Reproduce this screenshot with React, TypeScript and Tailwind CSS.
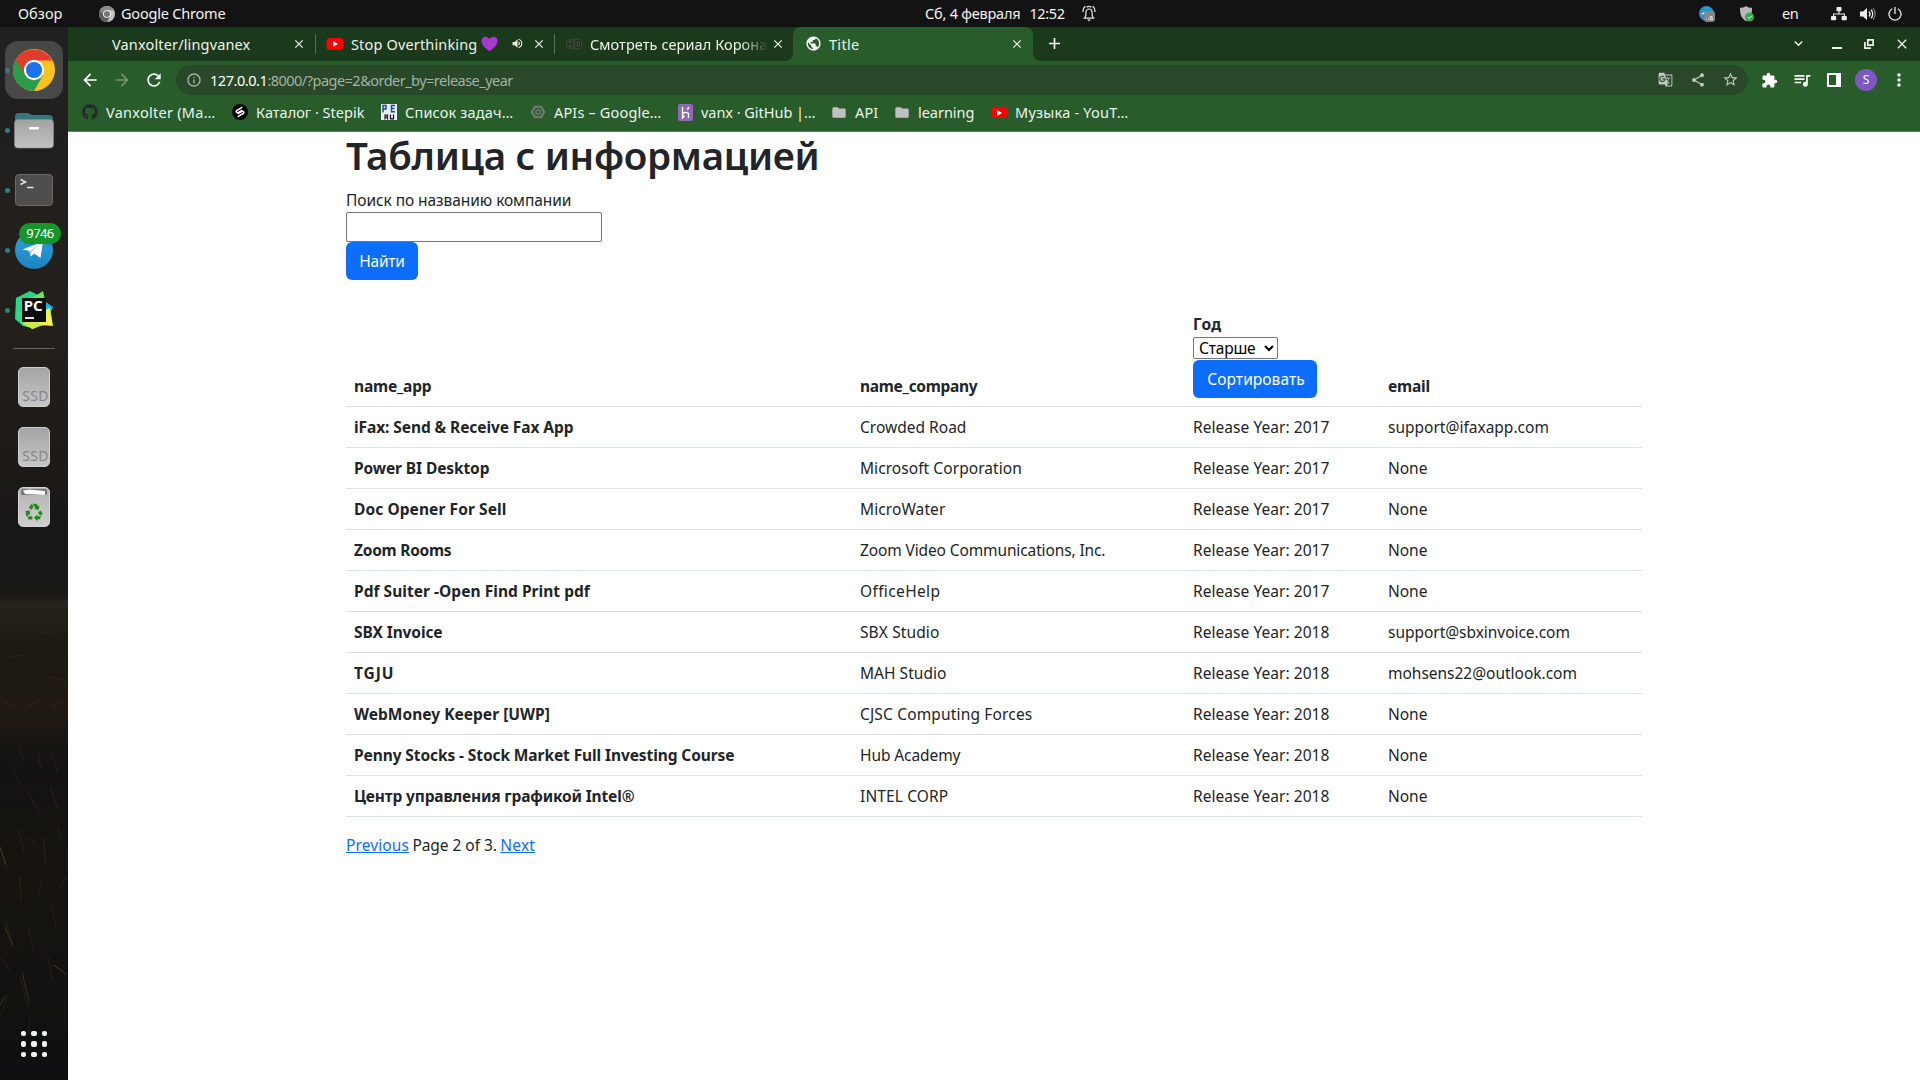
import { useLayoutEffect, useRef, type ReactNode } from "react";
import { FaGithub, FaYoutube } from "react-icons/fa";
import {
  MdArrowBack, MdArrowForward, MdRefresh, MdOutlineInfo, MdGTranslate, MdShare, MdStarBorder,
  MdExtension, MdQueueMusic, MdMoreVert, MdClose, MdAdd, MdVolumeUp, MdExpandMore, MdPublic, MdFolder, MdRecycling,
} from "react-icons/md";

/** Single-line label whose letter spacing is tuned so that it spans `w` pixels. */
function Fit({ w, className = "", children }: { w: number; className?: string; children: string }) {
  const ref = useRef<HTMLSpanElement>(null);
  useLayoutEffect(() => {
    const el = ref.current;
    if (!el) return;
    el.style.letterSpacing = "0px";
    const natural = el.getBoundingClientRect().width;
    el.style.letterSpacing = `${(w + 0.4 - natural) / Array.from(children).length}px`;
  }, [w, children]);
  return <span ref={ref} className={`inline-block whitespace-pre ${className}`}>{children}</span>;
}

function ChromeLogo({ size, mono = false }: { size: number; mono?: boolean }) {
  const c = mono ? ["#8a8a8a", "#5f5f5f", "#c4c4c4", "#777"] : ["#e33b2e", "#2a9c4a", "#fcc31e", "#1a73e8"];
  return (
    <svg width={size} height={size} viewBox="0 0 48 48">
      <circle cx="24" cy="24" r="24" fill={c[2]} />
      <path d="M24 24 L3.2 12 A24 24 0 0 0 24 48 L34.4 30 Z" fill={c[1]} />
      <path d="M24 13 H44.8 A24 24 0 0 0 3.2 12 L14 30 L24 24 Z" fill={c[0]} />
      <circle cx="24" cy="24" r="11.6" fill="#fff" />
      <circle cx="24" cy="24" r="9.2" fill={c[3]} />
    </svg>
  );
}

function TopBar() {
  return (
    <header className="flex h-[27px] items-center bg-[#131313] text-[14.500px] leading-[27px] text-[#f2f2f2]">
      <div className="w-[99px] pl-[18px]"><Fit w={44}>Обзор</Fit></div>
      <ChromeLogo size={16} mono />
      <div className="w-[810px] pl-[6px]"><Fit w={104}>Google Chrome</Fit></div>
      <div className="flex w-[781px] items-center">
        <Fit w={95}>Сб, 4 февраля</Fit>
        <span className="w-[9px]" />
        <Fit w={35}>12:52</Fit>
        <svg className="ml-[17px]" width="14" height="17" viewBox="0 0 14 17" fill="none" stroke="#e8e8e8" strokeWidth="1.2">
          <path d="M1.5 13.2h11M3 12.5c1-1.5 1-3 1-5.500a3 3 0 0 1 6 0c0 2.500 0 4 1 5.500M1 7c0-3 .8-4.600 2.400-5.700M13 7c0-3-.8-4.600-2.400-5.700M4.500 2.200c1.500-1.100 3.500-1.100 5 0" />
          <path d="M5.200 14.500h3.600L7 16.500z" fill="#e8e8e8" stroke="none" />
        </svg>
      </div>
      <div className="flex flex-1 items-center">
        <svg className="-ml-[8px]" width="18" height="18" viewBox="0 0 18 18">
          <circle cx="8.500" cy="8.500" r="7.500" fill="#2b93cd" />
          <path d="M3 8.800l4-2v3z" fill="#fff" />
          <rect x="6" y="6" width="11" height="11" rx="3" fill="#858585" />
          <path d="M8 14h1M10 14h1M14.500 11.500h-2.300v3h2.300v-1.600h-2" stroke="#ddd" fill="none" />
        </svg>
        <svg className="ml-[23px]" width="16" height="18" viewBox="0 0 16 18">
          <path d="M7 1c2 1.500 4 1.800 6 1.800 0 6-1 10-6 13.500C2 13 1 9 1 2.800 3 2.800 5 2.500 7 1z" fill="#b9b9b9" />
          <circle cx="10.500" cy="12" r="4.500" fill="#34a94a" />
          <path d="M8.500 12l1.500 1.500 2.600-2.600" stroke="#fff" fill="none" />
        </svg>
        <span className="ml-[27px] w-[49px]"><Fit w={16}>en</Fit></span>
        <svg width="16" height="14" viewBox="0 0 16 14" fill="#ececec">
          <rect x="5.500" y="0" width="5" height="4.200" rx=".8" /><rect x="0" y="9" width="5.200" height="4.200" rx=".8" /><rect x="10.600" y="9" width="5.200" height="4.200" rx=".8" />
          <path d="M8 4v3M2.600 9.500V7h10.800v2.500" fill="none" stroke="#ececec" strokeWidth="1.100" />
        </svg>
        <svg className="ml-[13px]" width="16" height="14" viewBox="0 0 16 14" fill="none" stroke="#ececec" strokeWidth="1.300">
          <path d="M0 4.500h3L7 1v12L3 9.500H0z" fill="#ececec" stroke="none" />
          <path d="M9 4.500c1.200 1.400 1.200 3.600 0 5M11 2.800c2.300 2.300 2.300 6.100 0 8.400" />
          <path d="M13 1.200c2.800 3.200 2.800 8.400 0 11.600" stroke="#777" />
        </svg>
        <svg className="ml-[12px]" width="14" height="14" viewBox="0 0 14 14" fill="none" stroke="#ececec" strokeWidth="1.300">
          <path d="M4.200 1.800a6 6 0 1 0 5.600 0M7 0v7" />
        </svg>
      </div>
    </header>
  );
}

function DockItem({ running = false, children }: { running?: boolean; children: ReactNode }) {
  return (
    <div className="relative flex h-[60px] items-center justify-center">
      {running && <span className="absolute left-[5px] top-[27.500px] h-[5px] w-[5px] rounded-full bg-[#2d7f83]" />}
      {children}
    </div>
  );
}

function Ssd() {
  return (
    <div className="flex h-[40px] w-[32px] items-end justify-center overflow-hidden rounded-[5px] border border-[#cfcfcf] bg-linear-to-b from-[#a4a4a4] to-[#c6c6c6] text-[14px] leading-[18px] text-[#868686]">
      <Fit w={26} className="mb-px ml-[3px]">SSD</Fit>
    </div>
  );
}

function Dock() {
  return (
    <aside className="relative flex w-[68px] shrink-0 flex-col bg-linear-to-b from-[#202020] via-[#241f1b] via-30% to-[#171614] to-50% pt-[13px]">
      <svg className="absolute left-0 top-[520px]" width="68" height="533" viewBox="0 0 68 533" fill="none">
        <defs>
          <linearGradient id="field" x1="0" y1="0" x2="0" y2="1">
            <stop offset="0" stopColor="#191715" /><stop offset=".09" stopColor="#191815" /><stop offset=".105" stopColor="#27221a" />
            <stop offset=".2" stopColor="#1c1812" /><stop offset=".3" stopColor="#201a12" /><stop offset=".42" stopColor="#121211" />
            <stop offset=".6" stopColor="#17140f" /><stop offset="1" stopColor="#0e1011" />
          </linearGradient>
        </defs>
        <rect width="68" height="533" fill="url(#field)" />
        <g stroke="#5b4020" strokeOpacity=".3" strokeWidth="1">
          <path d="M5 90l8 4M40 85l12 3M10 110l14-2M50 130l15 4M3 155l9 3M28 160l12-8M52 160l8-5M18 200l6 14M38 206l3 16M52 208l6 18M12 218l7 18M28 246l12 20M50 240l8 22M18 282l6 22M27 290l10 8M0 300l7 22M43 290l3 28M58 280l3 14M20 330l1 24M38 350l4-18M60 340l6-10M52 360l4 20M5 372l8 26M28 380l5 22M0 410l10 14M48 410l5 24M20 430l8 32M54 418l12 10M0 470l8-22M30 470l-2 18" />
        </g>
        <path d="M54 418l12 9M0 300l6 18M0 458l6-10M22 425l7 30M5 380l8 20" stroke="#93663a" strokeOpacity=".35" />
      </svg>
      <DockItem running>
        <div className="flex h-[58px] w-[58px] items-center justify-center rounded-[13px] bg-[#484848]"><ChromeLogo size={42} /></div>
      </DockItem>
      <DockItem running>
        <svg width="40" height="38" viewBox="0 0 40 38">
          <defs><linearGradient id="fl" x1="0" y1="0" x2="0" y2="1"><stop stopColor="#a2a2a2" /><stop offset="1" stopColor="#c2c2c2" /></linearGradient></defs>
          <path d="M1 6a4 4 0 0 1 4-4h9l4 2h17a4 4 0 0 1 4 4v16H1z" fill="#35777a" />
          <rect x=".5" y="8.500" width="39" height="28.500" rx="3.500" fill="url(#fl)" stroke="#8c8c8c" strokeWidth=".6" />
          <rect x="15" y="16" width="10" height="2.500" rx=".8" fill="#fff" />
        </svg>
      </DockItem>
      <DockItem running>
        <div className="h-[32px] w-[38px] rounded-[4px] border border-[#6a6a6a] bg-[#4e4e4e]">
          <svg width="36" height="30" viewBox="0 0 36 30" fill="none" stroke="#e6e6e6" strokeWidth="1.500"><path d="M4.500 4.500l5 2.500-5 2.500M11 12.500h6.500" /></svg>
        </div>
      </DockItem>
      <DockItem running>
        <svg width="38" height="38" viewBox="0 0 38 38">
          <defs><linearGradient id="tg" x1="0" y1="0" x2="0" y2="1"><stop stopColor="#2fa3dd" /><stop offset="1" stopColor="#1c84c0" /></linearGradient></defs>
          <circle cx="19" cy="19" r="19" fill="url(#tg)" />
          <path d="M7.500 18.500L28 10.500 25.500 27l-6.500-4.500-3.200 3-1.300-5.500z" fill="#fff" />
          <path d="M14.500 20L24 13.500l-7 7.500-1.200 4.500z" fill="#b9d8ea" />
        </svg>
        <span className="absolute left-[19px] top-[3px] flex h-[21px] w-[42px] items-center justify-center rounded-full bg-[#15952a] text-[13px] leading-none text-white shadow"><Fit w={27}>9746</Fit></span>
      </DockItem>
      <DockItem running>
        <svg width="40" height="40" viewBox="0 0 40 40">
          <path d="M2 8L16 1l8 4 8 30-14 3L9 36 1 29z" fill="#27d588" />
          <path d="M18 8L29 1l2 9z" fill="#7ddb5a" />
          <path d="M26 8l13 9-4 9-9 2z" fill="#12b9ea" />
          <path d="M8 30l28-12 3 18-12-1-9 4z" fill="#eef34e" />
          <path d="M2 24l7 12 9-5V10z" fill="#2edb8e" />
          <path d="M8 34l8-5 12 6-9 4z" fill="#c9ec4c" />
          <rect x="8" y="8" width="24" height="24" fill="#0d0d0d" />
          <path d="M11 28h9" stroke="#fff" strokeWidth="1.800" />
          <text x="9.800" y="20.500" fontFamily="Noto Sans" fontSize="15" fontWeight="700" fill="#fff">PC</text>
        </svg>
      </DockItem>
      <div className="relative flex h-[17px] items-center justify-center"><span className="h-px w-[42px] bg-[#6a6663]" /></div>
      <DockItem><Ssd /></DockItem>
      <DockItem><Ssd /></DockItem>
      <DockItem>
        <div className="flex h-[40px] w-[32px] flex-col items-center rounded-[5px] border border-[#d5d5d5] bg-linear-to-b from-[#b4b4b4] to-[#cecece]">
          <svg width="28" height="8" viewBox="0 0 28 8"><rect x="1" y="1" width="26" height="6" rx="1.500" fill="#777" /><path d="M3 2.500l6-1 16 1.500v4L5 6z" fill="#fafafa" /></svg>
          <MdRecycling className="mt-[6px] text-[20px] text-[#23891c]" />
        </div>
      </DockItem>
      <div className="relative mt-auto mb-[23px] grid grid-cols-3 gap-[5px] self-center">
        {Array.from({ length: 9 }, (_, i) => <span key={i} className="h-[5.500px] w-[5.500px] rounded-[2px] bg-[#f1f1f1]" />)}
      </div>
    </aside>
  );
}

function YouTubeIcon({ size }: { size: number }) {
  return (
    <span className="relative flex w-[16px] justify-center">
      <FaYoutube size={size} className="shrink-0 text-[#fe0000]" />
      <svg className="absolute left-[5px] top-[5px]" width="7" height="8" viewBox="0 0 7 8"><path d="M1 1l5 3-5 3z" fill="#fff" /></svg>
    </span>
  );
}

function TabStrip() {
  return (
    <div className="flex h-[34px] bg-[#285d2b] text-[14.500px] leading-[20px] text-[#edf3ed]">
      <div className="flex w-[725px] items-center rounded-br-[8px] bg-[#1b391b] pb-px">
        <div className="flex w-[247px] items-center pl-[20px]">
          <FaGithub size={16} className="text-[#24332a]" />
          <div className="w-[188px] shrink-0 pl-[8px]"><Fit w={138}>Vanxolter/lingvanex</Fit></div>
          <MdClose size={14} className="shrink-0" />
        </div>
        <span className="h-[20px] w-px bg-[#4f7250]" />
        <div className="flex w-[238px] items-center pl-[11px]">
          <YouTubeIcon size={18} />
          <div className="flex w-[170px] items-center pl-[8px]">
            <Fit w={126}>Stop Overthinking</Fit>
            <svg className="ml-[4px]" width="17" height="16" viewBox="0 0 17 16"><path d="M8.500 15.500C5 12.500.5 9.500.5 5 .5 2 2.500.7 4.500.7c1.800 0 3.200 1 4 2.500.8-1.500 2.200-2.500 4-2.500 2 0 4 1.300 4 4.300 0 4.500-4.500 7.500-8 10.500z" fill="#a639d0" /></svg>
          </div>
          <MdVolumeUp size={13} className="-ml-[2px]" />
          <MdClose size={14} className="ml-[8px]" />
        </div>
        <span className="h-[20px] w-px bg-[#4f7250]" />
        <div className="flex flex-1 items-center pl-[11px]">
          <svg width="16" height="12" viewBox="0 0 16 12" fill="none" stroke="#607060" strokeWidth="2.600"><path d="M2 1v10M6 1v10M2 6h4M10 2v8h1.500a3 3 0 0 0 3-3V5a3 3 0 0 0-3-3z" /><path d="M2 1v10M6 1v10M2 6h4M10 2v8h1.500a3 3 0 0 0 3-3V5a3 3 0 0 0-3-3z" stroke="#1b241b" strokeWidth="1.500" /></svg>
          <div className="ml-[8px] w-[178px] overflow-hidden mask-r-from-85% mask-r-to-100%"><Fit w={177}>Смотреть сериал Корона</Fit></div>
          <MdClose size={14} className="ml-[3px]" />
        </div>
      </div>
      <div className="w-[240px] bg-linear-to-b from-[#1b391b] from-50% to-[#285d2b] to-50%">
        <div className="flex h-[34px] items-center rounded-t-[8px] bg-[#285d2b] pb-px pl-[12px]">
          <MdPublic size={17} className="text-white" />
          <div className="w-[188px] shrink-0 pl-[7px]"><Fit w={30}>Title</Fit></div>
          <MdClose size={14} className="shrink-0" />
        </div>
      </div>
      <div className="flex flex-1 items-center rounded-bl-[8px] bg-[#1b391b] pb-px">
        <MdAdd size={19} className="ml-[12px] text-white" />
        <div className="ml-auto flex items-center">
          <MdExpandMore size={17} />
          <span className="ml-[25px] mt-[9px] h-[2px] w-[10px] bg-current" />
          <svg className="ml-[22px]" width="10" height="10" viewBox="0 0 10 10" fill="none" stroke="currentColor" strokeWidth="1.700"><path d="M3.800.9h5.300v5.300H3.800zM.9 3v6.100H7" /></svg>
          <MdClose size={16} className="ml-[20px] mr-[10px]" />
        </div>
      </div>
    </div>
  );
}

function Toolbar() {
  return (
    <div className="flex h-[38px] items-center bg-[#285d2b] text-white">
      <MdArrowBack size={20} className="ml-[12px]" />
      <MdArrowForward size={20} className="ml-[12px] text-[#739174]" />
      <MdRefresh size={20} className="ml-[12px]" />
      <div className="ml-[12px] flex h-[30px] w-[1572px] items-center rounded-full bg-[#284829] pb-px text-[14.500px] leading-[20px]">
        <MdOutlineInfo size={16} className="ml-[10px] text-[#a8b6a9]" />
        <span className="ml-[8px]"><Fit w={57}>127.0.0.1</Fit></span>
        <Fit w={245} className="text-[#a3b3a4]">:8000/?page=2&amp;order_by=release_year</Fit>
        <div className="ml-auto flex items-center text-[#bec8be]">
          <MdGTranslate size={15} />
          <MdShare size={16} className="ml-[17px]" />
          <MdStarBorder size={17} className="ml-[16px] mr-[9px]" />
        </div>
      </div>
      <MdExtension size={17} className="ml-[13px]" />
      <MdQueueMusic size={20} className="ml-[14px]" />
      <svg className="ml-[15px]" width="14" height="14" viewBox="0 0 14 14" fill="none"><rect x="1" y="1" width="12" height="12" stroke="#fff" strokeWidth="2" /><path d="M9 0h5v14H9z" fill="#fff" /></svg>
      <span className="ml-[14px] flex h-[22px] w-[22px] items-center justify-center rounded-full bg-[#7e57c2] text-[12px]">S</span>
      <MdMoreVert size={20} className="ml-[12px]" />
    </div>
  );
}

function Bookmark({ box, w, label, children }: { box: string; w: number; label: string; children: ReactNode }) {
  return (
    <div className={`flex items-center ${box}`}>
      <span className="flex w-[16px] justify-center">{children}</span>
      <Fit w={w} className="ml-[8px]">{label}</Fit>
    </div>
  );
}

function Bookmarks() {
  return (
    <div className="flex h-[33px] items-center border-b border-[#578259] bg-[#285d2b] pb-[6px] pl-[14px] text-[14.500px] leading-[20px] text-[#edf3ed]">
      <Bookmark box="w-[150px]" w={109} label="Vanxolter (Ma…"><FaGithub size={16} className="text-[#24292f]" /></Bookmark>
      <Bookmark box="w-[149px]" w={108} label="Каталог · Stepik">
        <svg width="16" height="16" viewBox="0 0 16 16"><circle cx="8" cy="8" r="8" fill="#000" /><path d="M9.800 3.600L4.600 6.600c-1.300 1 0 2.600 1.300 1.900l4-2M6.200 12.400l5.200-3c1.300-1 0-2.600-1.300-1.900l-4 2" stroke="#fff" strokeWidth="1.400" fill="none" strokeLinecap="round" /></svg>
      </Bookmark>
      <Bookmark box="w-[149px]" w={108} label="Список задач…">
        <svg width="16" height="16" viewBox="0 0 16 16"><rect width="16" height="16" fill="#e9effa" /><path d="M2 8.500V1.500h3v3.500H2M14 1.500h-3.500v6.300H14M10.500 4.600h3" stroke="#1f4d8f" strokeWidth="1.500" fill="none" /><path d="M4 15.500v-4.500h2.500v2H4M5.500 13L7 15.500M9.500 10.500V14.800h3v-4.300" stroke="#111" strokeWidth="1.200" fill="none" /></svg>
      </Bookmark>
      <Bookmark box="w-[147px]" w={107} label="APIs – Google…">
        <svg width="14" height="14" viewBox="0 0 16 16" fill="none" stroke="#777d77"><path d="M4.500 2h7L15 8l-3.500 6h-7L1 8z" strokeWidth="2.400" /><circle cx="8" cy="8" r="2.500" strokeWidth="1.500" /></svg>
      </Bookmark>
      <Bookmark box="w-[154px]" w={114} label="vanx · GitHub |…">
        <svg width="15" height="17" viewBox="0 0 15 17" fill="none"><rect width="15" height="17" rx="2" fill="#9068b4" /><path d="M4.500 3v6.500c2-1 6-1.800 6 .5v4M10.500 3c0 1-.5 2-1.200 2.800M4.500 11v3l1.600-1.500z" stroke="#fff" strokeWidth="1.400" /></svg>
      </Bookmark>
      <Bookmark box="w-[63px]" w={23} label="API"><MdFolder size={17} className="text-[#c1c1c1]" /></Bookmark>
      <Bookmark box="w-[97px]" w={56} label="learning"><MdFolder size={17} className="text-[#c1c1c1]" /></Bookmark>
      <Bookmark box="w-[150px]" w={113} label="Музыка - YouT…"><YouTubeIcon size={17} /></Bookmark>
    </div>
  );
}

type Cell = [string, number];
const rows: { app: Cell; company: Cell; year: number; email: Cell }[] = [
  { app: ["iFax: Send & Receive Fax App", 219], company: ["Crowded Road", 106], year: 2017, email: ["support@ifaxapp.com", 160.5] },
  { app: ["Power BI Desktop", 135], company: ["Microsoft Corporation", 161.5], year: 2017, email: ["None", 39] },
  { app: ["Doc Opener For Sell", 152], company: ["MicroWater", 85], year: 2017, email: ["None", 39] },
  { app: ["Zoom Rooms", 97], company: ["Zoom Video Communications, Inc.", 245], year: 2017, email: ["None", 39] },
  { app: ["Pdf Suiter -Open Find Print pdf", 235.5], company: ["OfficeHelp", 80], year: 2017, email: ["None", 39] },
  { app: ["SBX Invoice", 88], company: ["SBX Studio", 79], year: 2018, email: ["support@sbxinvoice.com", 181.5] },
  { app: ["TGJU", 40], company: ["MAH Studio", 86], year: 2018, email: ["mohsens22@outlook.com", 188.5] },
  { app: ["WebMoney Keeper [UWP]", 195.5], company: ["CJSC Computing Forces", 172], year: 2018, email: ["None", 39] },
  { app: ["Penny Stocks - Stock Market Full Investing Course", 380], company: ["Hub Academy", 100], year: 2018, email: ["None", 39] },
  { app: ["Центр управления графикой Intel®", 280], company: ["INTEL CORP", 88], year: 2018, email: ["None", 39] },
];

const grid = "grid grid-cols-[506px_333px_195px_262px] border-b border-[#dee2e6]";

export default function App() {
  return (
    <div className="flex h-[1080px] w-[1920px] flex-col overflow-hidden font-['Noto_Sans',sans-serif]">
      <TopBar />
      <div className="flex min-h-0 flex-1">
        <Dock />
        <div className="flex min-w-0 flex-1 flex-col">
          <TabStrip />
          <Toolbar />
          <Bookmarks />
          <main className="flex-1 bg-white pl-[278px] text-[15.500px] leading-[24px] text-[#212529]">
            <h1 className="mb-[9px] h-[47px] text-[38.500px] leading-[46px] font-semibold"><Fit w={473}>Таблица с информацией</Fit></h1>
            <form className="flex flex-col items-start">
              <label className="h-[24px]"><Fit w={225}>Поиск по названию компании</Fit></label>
              <input className="h-[30px] w-[256px] rounded-[2px] border border-[#767676] bg-white" />
              <button type="button" className="h-[38px] w-[72px] rounded-[6px] bg-[#0d6efd] text-white"><Fit w={45}>Найти</Fit></button>
            </form>
            <section className="mt-[32px] w-[1296px]">
              <div className={`${grid} items-end`}>
                <div className="px-[8px] pb-[8px] font-bold"><Fit w={77}>name_app</Fit></div>
                <div className="px-[8px] pb-[8px] font-bold"><Fit w={117}>name_company</Fit></div>
                <div className="flex flex-col items-start px-[8px] pb-[8px]">
                  <span className="font-bold"><Fit w={28}>Год</Fit></span>
                  <div className="mt-px flex h-[22px] w-[85px] items-center rounded-[2px] border border-[#767676] pl-[5px] leading-[20px] text-black">
                    <Fit w={56}>Старше</Fit>
                    <svg className="ml-[9px]" width="10" height="7" viewBox="0 0 10 7" fill="none" stroke="#000" strokeWidth="2"><path d="M1 1l4 4 4-4" /></svg>
                  </div>
                  <button type="button" className="mt-px h-[38px] w-[124px] rounded-[6px] bg-[#0d6efd] pl-[2px] text-white"><Fit w={97}>Сортировать</Fit></button>
                </div>
                <div className="px-[8px] pb-[8px] font-bold"><Fit w={41.5}>email</Fit></div>
              </div>
              {rows.map((r) => (
                <div key={r.app[0]} className={`${grid} h-[41px] items-center px-0`}>
                  <div className="px-[8px] font-bold"><Fit w={r.app[1]}>{r.app[0]}</Fit></div>
                  <div className="px-[8px]"><Fit w={r.company[1]}>{r.company[0]}</Fit></div>
                  <div className="px-[8px]"><Fit w={136}>{`Release Year: ${r.year}`}</Fit></div>
                  <div className="px-[8px]"><Fit w={r.email[1]}>{r.email[0]}</Fit></div>
                </div>
              ))}
            </section>
            <nav className="mt-[16px] flex gap-[3.500px]">
              <a className="text-[#0d6efd]"><Fit w={62.5} className="underline">Previous</Fit></a>
              <Fit w={84}>Page 2 of 3.</Fit>
              <a className="text-[#0d6efd]"><Fit w={34.5} className="underline">Next</Fit></a>
            </nav>
          </main>
        </div>
      </div>
    </div>
  );
}
